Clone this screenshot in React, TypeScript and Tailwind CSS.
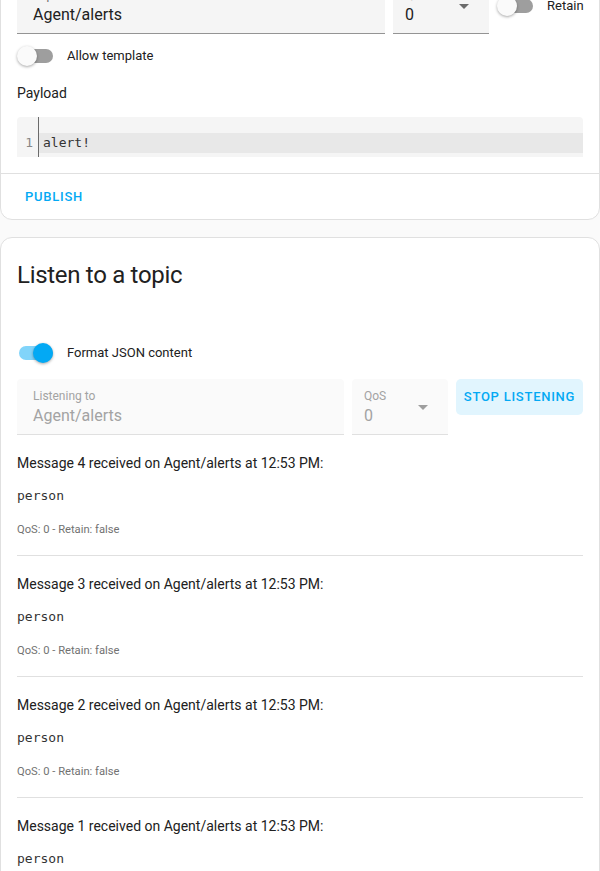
import React from "react";

const font = { fontFamily: "Roboto, 'Noto Sans', sans-serif" };
const mono = { fontFamily: "'DejaVu Sans Mono', monospace" };

function Switch({ on }: { on?: boolean }) {
  return (
    <div className="relative h-5 w-[36px] shrink-0">
      <div
        className={
          "absolute left-0.5 top-[3px] h-[14px] w-[34px] rounded-full " +
          (on ? "bg-[#81d4fa]" : "bg-[#9e9e9e]")
        }
      />
      <div
        className={
          "absolute top-0 h-5 w-5 rounded-full shadow-[0_1px_3px_rgba(0,0,0,0.35)] " +
          (on ? "left-4 bg-[#03a9f4]" : "left-0 bg-[#fafafa]")
        }
      />
    </div>
  );
}

function Arrow({ color }: { color: string }) {
  return (
    <svg width="10" height="5" viewBox="0 0 10 5" className="absolute right-[20px] top-[26px]">
      <path d="M0 0 L5 5 L10 0 Z" fill={color} />
    </svg>
  );
}

function Field({
  label,
  value,
  width,
  disabled,
  select,
}: {
  label: string;
  value: string;
  width: string;
  disabled?: boolean;
  select?: boolean;
}) {
  return (
    <div
      className={
        "relative h-14 shrink-0 rounded-t-[4px] border-b pt-[9px] " +
        width +
        (select ? " pl-3" : " pl-4") +
        (disabled ? " bg-[#fafafa] border-[#e0e0e0]" : " bg-[#f5f5f5] border-[#949494]")
      }
    >
      <div className={"text-xs leading-4 " + (disabled ? "text-[#a3a3a3]" : "text-[#6b6b6b]")}>{label}</div>
      <div className={"text-base leading-6 " + (disabled ? "text-[#a3a3a3]" : "text-[#212121]")}>{value}</div>
      {select && <Arrow color={disabled ? "#9e9e9e" : "#6b6b6b"} />}
    </div>
  );
}

function Message({ n }: { n: number }) {
  return (
    <div className="border-b border-[#e0e0e0] pt-[18px] pb-[17px]">
      <div className="text-sm leading-5 text-[#212121]">
        Message {n} received on Agent/alerts at 12:53 PM:
      </div>
      <pre className="mt-[13px] text-[13px] leading-5 text-[#333]" style={mono}>
        person
      </pre>
      <div className="mt-4 text-[11.2px] leading-4 text-[#727272]">QoS: 0 - Retain: false</div>
    </div>
  );
}

export default function App() {
  return (
    <div className="min-h-screen overflow-hidden bg-[#fafafa]" style={font}>
      <div className="-mt-[39px] flex flex-col gap-[17px]">
        {/* publish card */}
        <div className="rounded-xl border border-[#e0e0e0] bg-white">
          <div className="px-4 pt-4 pb-4">
            <div className="flex items-center gap-2">
              <Field label="Topic" value="Agent/alerts" width="w-[368px]" />
              <Field label="QoS" value="0" width="w-[96px]" select />
              <div className="flex items-center">
                <Switch />
                <span className="ml-[14px] text-[13px] text-[#212121]">Retain</span>
              </div>
            </div>
            <div className="flex h-11 items-center">
              <Switch />
              <span className="ml-[14px] text-[13px] text-[#212121]">Allow template</span>
            </div>
            <p className="mt-[5px] text-sm leading-5 text-[#212121]">Payload</p>
            <div className="mt-[14px] flex rounded-t-[4px] bg-[#f5f5f5] text-[13px] leading-5" style={mono}>
              <div className="w-[22px] border-r border-[#6b6b6b] pt-4 pb-1 pr-[5px] text-right text-[#888]">
                1
              </div>
              <div className="flex-1 pt-4 pb-1">
                <div className="bg-[#e8e8e8] pl-1 text-[#333]">alert!</div>
              </div>
            </div>
          </div>
          <div className="flex h-[46px] items-center border-t border-[#e0e0e0] px-4">
            <button className="px-2 text-[13px] font-medium tracking-[0.75px] text-[#03a9f4]">PUBLISH</button>
          </div>
        </div>

        {/* listen card */}
        <div className="rounded-xl border border-[#e0e0e0] bg-white">
          <h2 className="px-4 pt-[21px] pb-4 text-2xl leading-8 tracking-[-0.3px] text-[#212121]">Listen to a topic</h2>
          <div className="px-4">
            <div className="mt-[24px] flex h-11 items-center">
              <Switch on />
              <span className="ml-[14px] text-[13px] text-[#212121]">Format JSON content</span>
            </div>
            <div className="mt-[4px] flex items-start gap-2">
              <Field label="Listening to" value="Agent/alerts" width="w-[327px]" disabled />
              <Field label="QoS" value="0" width="w-[96px]" disabled select />
              <button className="h-9 w-[127px] rounded-[5px] bg-[#e1f5fe] text-[13px] font-medium tracking-[0.75px] text-[#03a9f4]">
                STOP LISTENING
              </button>
            </div>
            {[4, 3, 2, 1].map((n) => (
              <Message key={n} n={n} />
            ))}
          </div>
        </div>
      </div>
    </div>
  );
}
